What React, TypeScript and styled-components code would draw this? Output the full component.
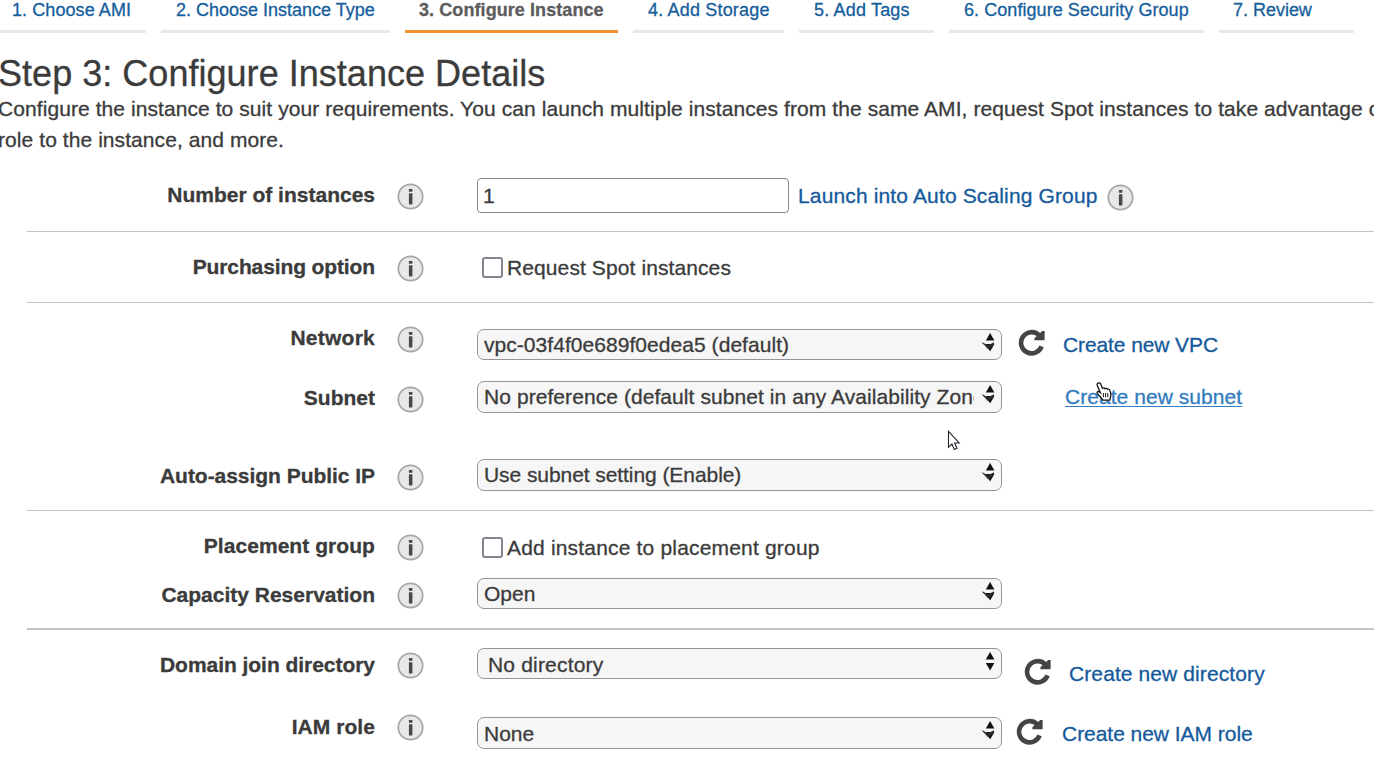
import React from "react";
import styled, { createGlobalStyle } from "styled-components";

const GlobalStyle = createGlobalStyle`
  html, body { margin: 0; background: #fff; overflow: hidden; }
  body { font-family: "Liberation Sans", Arial, sans-serif; font-size: 21px; line-height: 24px; color: #3b3b3b; -webkit-text-stroke: 0.3px currentColor; }
  *, *::before, *::after { box-sizing: border-box; }
`;

const Page = styled.main`
  width: 1374px;
  height: 761px;
  overflow: hidden;
`;

const Steps = styled.nav`
  display: flex;
  gap: 15px;
  height: 33px;
`;

const Step = styled.a<{ $width: number; $pad?: number; $active?: boolean; $ls?: number }>`
  width: ${(p) => p.$width}px;
  padding-left: ${(p) => p.$pad ?? 15}px;
  border-bottom: 3px solid ${(p) => (p.$active ? "#f3922f" : "#e8e8e8")};
  color: ${(p) => (p.$active ? "#5c5c5c" : "#155e9c")};
  font-size: 18px;
  font-weight: ${(p) => (p.$active ? 700 : 400)};
  letter-spacing: ${(p) => p.$ls ?? 0.08}px;
  line-height: 20px;
  white-space: nowrap;
`;

const Title = styled.h1`
  margin: 0;
  padding-top: 21px;
  height: 60px;
  font-size: 36px;
  font-weight: 400;
  line-height: 40px;
  letter-spacing: 0.03px;
  text-indent: -2px;
  white-space: nowrap;
`;

const Intro = styled.p`
  margin: 0 0 0 -2px;
  height: 85px;
  line-height: 31px;
  letter-spacing: 0.075px;
  white-space: nowrap;
`;

const Section = styled.section<{ $rule?: number; $first?: boolean }>`
  margin-left: 27px;
  padding-top: ${(p) => (p.$first ? 0 : 18)}px;
  border-bottom: ${(p) => p.$rule ?? 1}px solid #c3c3c3;
`;

const Row = styled.div<{ $height: number }>`
  display: flex;
  height: ${(p) => p.$height}px;
  align-items: flex-start;
`;

const Label = styled.div<{ $ls?: number }>`
  width: 348px;
  padding-top: 5px;
  text-align: right;
  font-weight: 700;
  letter-spacing: ${(p) => p.$ls ?? 0}px;
  white-space: nowrap;
`;

const InfoSlot = styled.div<{ $top?: number }>`
  width: 102px;
  padding: ${(p) => p.$top ?? 5}px 0 0 22px;
  display: flex;
`;

const Control = styled.div<{ $top?: number }>`
  display: flex;
  align-items: flex-start;
  padding-top: ${(p) => p.$top ?? 0}px;
  white-space: nowrap;
`;

const TextBox = styled.div`
  width: 312px;
  height: 35px;
  padding-left: 5px;
  border: 1px solid #85858f;
  border-radius: 4px;
  line-height: 34px;
`;

const SelectBox = styled.div<{ $height: number; $pad: number }>`
  display: flex;
  width: 525px;
  height: ${(p) => p.$height}px;
  padding: 0 5px 0 ${(p) => p.$pad}px;
  border: 1px solid #96969a;
  border-radius: 7px;
  background: #f6f6f6;
`;

const SelectText = styled.span<{ $line: number; $ls?: number }>`
  flex: 1;
  min-width: 0;
  overflow: hidden;
  letter-spacing: ${(p) => p.$ls ?? 0}px;
  line-height: ${(p) => p.$line}px;
`;

const CheckBox = styled.span`
  width: 21px;
  height: 21px;
  margin: 0 4px 0 5px;
  border: 2px solid #85858f;
  border-radius: 3px;
`;

const CheckText = styled.span<{ $ls?: number }>`
  margin-top: -1px;
  letter-spacing: ${(p) => p.$ls ?? 0}px;
`;

const Link = styled.a<{ $left: number; $top: number; $hover?: boolean; $ls?: number }>`
  position: relative;
  margin-left: ${(p) => p.$left}px;
  margin-top: ${(p) => p.$top}px;
  color: ${(p) => (p.$hover ? "#337cc0" : "#155a9c")};
  letter-spacing: ${(p) => p.$ls ?? 0}px;
  height: ${(p) => (p.$hover ? 22 : 24)}px;
  border-bottom: ${(p) => (p.$hover ? "1px solid #337cc0" : "0")};
`;

const IconSlot = styled.span<{ $left: number; $top: number }>`
  display: flex;
  margin-left: ${(p) => p.$left}px;
  margin-top: ${(p) => p.$top}px;
`;

const Pointer = styled.svg<{ $x: number; $y: number }>`
  position: absolute;
  left: ${(p) => p.$x}px;
  top: ${(p) => p.$y}px;
`;

const Info = () => (
  <svg width="27" height="27" viewBox="0 0 27 27">
    <circle cx="13.5" cy="13.5" r="12.2" fill="#e8e8e8" stroke="#a6a6a6" strokeWidth="1.7" />
    <rect x="11.9" y="6" width="3.5" height="2.8" rx="0.6" fill="#484848" />
    <rect x="11.9" y="10.2" width="3.5" height="11.2" rx="0.4" fill="#484848" />
  </svg>
);

const Refresh = () => (
  <svg width="27" height="27" viewBox="0 0 27 27">
    <path d="M23.6 17.4A10.6 10.6 0 1 1 20.9 6" fill="none" stroke="#444" strokeWidth="4.6" />
    <path d="M24.2 2H26.6V11.2H16.4V9.2Z" fill="#444" />
  </svg>
);

const Arrows = ({ check = true }: { check?: boolean }) => (
  <svg width="22" height="29" viewBox="0 0 22 29">
    <path d="M16.1 3L20.4 10.4H11.8Z" fill="#111" />
    <path d="M11.8 14H20.4L16.1 21.5Z" fill="#111" />
    {check && <path d="M7.6 12.6C10 12.6 11.5 14.2 13.6 15.6L20 12.2L20.2 13.6L14.2 19.6Q12 16.6 7.6 12.6Z" fill="#2c2c2c" />}
  </svg>
);

type SelectProps = { text: string; height?: number; line?: number; pad?: number; check?: boolean; ls?: number };

const Select = ({ text, height = 31, line = 30, pad = 6, check, ls }: SelectProps) => (
  <SelectBox $height={height} $pad={pad}>
    <SelectText $line={line} $ls={ls}>{text}</SelectText>
    <Arrows check={check} />
  </SelectBox>
);

type FieldProps = {
  label: string;
  height: number;
  top?: number;
  ls?: number;
  infoTop?: number;
  children: React.ReactNode;
};

const Field = ({ label, height, top, ls, infoTop, children }: FieldProps) => (
  <Row $height={height}>
    <Label $ls={ls}>{label}</Label>
    <InfoSlot $top={infoTop}><Info /></InfoSlot>
    <Control $top={top}>{children}</Control>
  </Row>
);

export default function App() {
  return (
    <Page>
      <GlobalStyle />
      <Steps>
        <Step $width={146} $pad={12}>1. Choose AMI</Step>
        <Step $width={229} $ls={0}>2. Choose Instance Type</Step>
        <Step $width={213} $pad={14} $active>3. Configure Instance</Step>
        <Step $width={151} $ls={0.18}>4. Add Storage</Step>
        <Step $width={135} $ls={0.18}>5. Add Tags</Step>
        <Step $width={255} $ls={0.06}>6. Configure Security Group</Step>
        <Step $width={135} $pad={14} $ls={-0.02}>7. Review</Step>
      </Steps>
      <Title>Step 3: Configure Instance Details</Title>
      <Intro>
        Configure the instance to suit your requirements. You can launch multiple instances from the same AMI, request Spot instances to take advantage of
        <br />
        role to the instance, and more.
      </Intro>

      <Section $first>
        <Field label="Number of instances" height={53}>
          <TextBox>1</TextBox>
          <Link $left={9} $top={6} $ls={0.14}>Launch into Auto Scaling Group</Link>
          <IconSlot $left={9} $top={6}><Info /></IconSlot>
        </Field>
      </Section>

      <Section>
        <Field label="Purchasing option" height={52} top={7} ls={-0.12}>
          <CheckBox />
          <CheckText $ls={0.1}>Request Spot instances</CheckText>
        </Field>
      </Section>

      <Section>
        <Field label="Network" height={60} top={8} ls={0.25}>
          <Select text="vpc-03f4f0e689f0edea5 (default)" ls={0.05} />
          <IconSlot $left={16} $top={0}><Refresh /></IconSlot>
          <Link $left={18} $top={4} $ls={-0.1}>Create new VPC</Link>
        </Field>
        <Field label="Subnet" height={78}>
          <Select text="No preference (default subnet in any Availability Zone)" height={32} line={29} ls={0.07} />
          <Link $left={63} $top={4} $hover $ls={0.05}>
            Create new subnet
            <Pointer $x={31} $y={-3} width="17" height="20" viewBox="0 0 17 20">
              <path d="M1.6 1.4C2.8.4 4.3 1 4.8 2.3L6.5 6.4C7.2 5.7 8.4 5.8 8.9 6.7C9.8 6 11 6.3 11.4 7.2C12.4 6.8 13.4 7.3 13.7 8.3C15 11 15.2 13 14.4 15.5L13.8 18.2H6.8C5.5 15.8 3.2 13.8 1.4 11.6C.6 10.3 1.7 9 3 9.7L4.4 10.7L1.4 3.8C.9 2.7.9 2 1.6 1.4Z" fill="#fff" stroke="#111" strokeWidth="1.3" />
              <path d="M7.4 11V15.2M9.6 11V15.2M11.8 11V15.2" stroke="#111" strokeWidth="1" />
            </Pointer>
            <Pointer $x={-118} $y={45} width="14" height="22" viewBox="0 0 14 22">
              <path d="M1.5 1.5V17.3L4.9 14L7.4 19.5L10 18.3L7.6 13H12.2Z" fill="#fff" stroke="#23232f" strokeWidth="1.1" />
            </Pointer>
          </Link>
        </Field>
        <Field label="Auto-assign Public IP" height={51} ls={-0.04}>
          <Select text="Use subnet setting (Enable)" height={32} line={29} ls={-0.07} />
        </Field>
      </Section>

      <Section $rule={2}>
        <Field label="Placement group" height={49} top={8} ls={0.06}>
          <CheckBox />
          <CheckText $ls={0.18}>Add instance to placement group</CheckText>
        </Field>
        <Field label="Capacity Reservation" height={50} infoTop={4}>
          <Select text="Open" />
        </Field>
      </Section>

      <Section>
        <Field label="Domain join directory" height={62} infoTop={4} ls={-0.04}>
          <Select text="No directory" line={32} pad={10} check={false} ls={0.18} />
          <IconSlot $left={22} $top={10}><Refresh /></IconSlot>
          <Link $left={18} $top={14} $ls={0.1}>Create new directory</Link>
        </Field>
        <Field label="IAM role" height={51} top={7} infoTop={4} ls={0.06}>
          <Select text="None" height={32} line={31} />
          <IconSlot $left={14} $top={1}><Refresh /></IconSlot>
          <Link $left={19} $top={5} $ls={-0.04}>Create new IAM role</Link>
        </Field>
      </Section>
    </Page>
  );
}
